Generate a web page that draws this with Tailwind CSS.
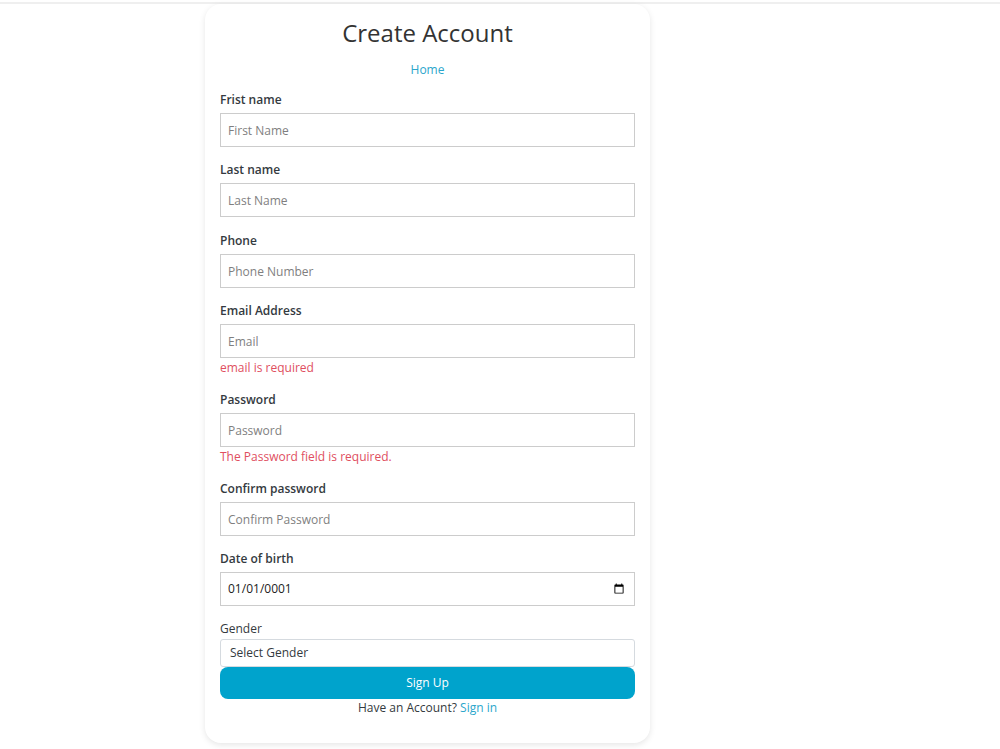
<!DOCTYPE html>
<html lang="en">
<head>
    <meta charset="UTF-8">
    <meta name="viewport" content="width=device-width, initial-scale=1.0">
    <title>Create Account</title>
    <script src="https://cdn.jsdelivr.net/npm/@tailwindcss/browser@4"></script>
</head>
<body class="min-h-screen bg-white font-['Open_Sans',sans-serif] text-xs leading-5 text-[#343a40]">
    <!-- Navbar bottom edge -->
    <header class="h-1 border-b-2 border-[#efefef] bg-white"></header>

    <main class="ml-[20.5%] w-[44.5%] rounded-2xl bg-white px-[15px] pt-[11px] pb-[26px] shadow-[0_2px_6px_rgba(0,0,0,0.1)]">
        <h1 class="text-center text-2xl leading-9 text-[#333333]">Create Account</h1>
        <p class="mt-[9px] mb-[10px] text-center"><a href="/" class="text-[#2ba6cb] hover:underline">Home</a></p>

        <form action="/register" method="post" novalidate>
            <div class="mb-[13px]">
                <label for="first-name" class="mb-[3px] block font-semibold">Frist name</label>
                <input id="first-name" type="text" placeholder="First Name" class="block h-[34px] w-full border border-[#cccccc] px-[7px] placeholder:text-[#7f7f7f]">
            </div>

            <div class="mb-[14px]">
                <label for="last-name" class="mb-[3px] block font-semibold">Last name</label>
                <input id="last-name" type="text" placeholder="Last Name" class="block h-[34px] w-full border border-[#cccccc] px-[7px] placeholder:text-[#7f7f7f]">
            </div>

            <div class="mb-[13px]">
                <label for="phone" class="mb-[3px] block font-semibold">Phone</label>
                <input id="phone" type="tel" placeholder="Phone Number" class="block h-[34px] w-full border border-[#cccccc] px-[7px] placeholder:text-[#7f7f7f]">
            </div>

            <div class="mb-[13px]">
                <label for="email" class="mb-[3px] block font-semibold">Email Address</label>
                <input id="email" type="email" placeholder="Email" aria-describedby="email-error" class="block h-[34px] w-full border border-[#cccccc] px-[7px] placeholder:text-[#7f7f7f]">
                <span id="email-error" class="block leading-[19px] text-[#e04f5f]">email is required</span>
            </div>

            <div class="mb-[13px]">
                <label for="password" class="mb-[3px] block font-semibold">Password</label>
                <input id="password" type="password" placeholder="Password" aria-describedby="password-error" class="block h-[34px] w-full border border-[#cccccc] px-[7px] placeholder:text-[#7f7f7f]">
                <span id="password-error" class="block leading-[19px] text-[#e04f5f]">The Password field is required.</span>
            </div>

            <div class="mb-[13px]">
                <label for="confirm-password" class="mb-[3px] block font-semibold">Confirm password</label>
                <input id="confirm-password" type="password" placeholder="Confirm Password" class="block h-[34px] w-full border border-[#cccccc] px-[7px] placeholder:text-[#7f7f7f]">
            </div>

            <div class="mb-[13px]">
                <label for="birth-date" class="mb-[3px] block font-semibold">Date of birth</label>
                <input id="birth-date" type="date" value="0001-01-01" class="block h-[34px] w-full border border-[#cccccc] px-[7px] text-[#222222] [&::-webkit-datetime-edit-month-field]:p-0 [&::-webkit-datetime-edit-day-field]:p-0 [&::-webkit-datetime-edit-year-field]:p-0">
            </div>

            <label for="gender" class="block">Gender</label>
            <select id="gender" class="block h-7 w-full appearance-none rounded-[3px] border border-[#d5dadf] bg-white px-[9px]">
                <option>Select Gender</option>
                <option>Male</option>
                <option>Female</option>
            </select>
            <button type="submit" class="block h-8 w-full rounded-lg bg-[#00a3cc] text-white hover:bg-[#008fb3]">Sign Up</button>
        </form>

        <p class="text-center leading-[18px]">Have an Account? <a href="/login" class="text-[#2ba6cb] hover:underline">Sign in</a></p>
    </main>
</body>
</html>
